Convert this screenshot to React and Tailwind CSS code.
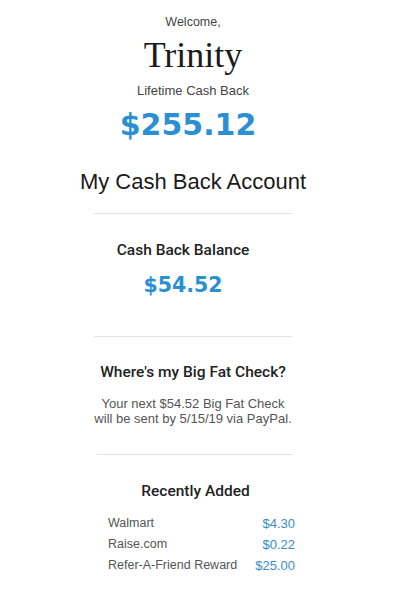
export default function App() {
	const recent = [
		{ name: "Walmart", amount: "$4.30" },
		{ name: "Raise.com", amount: "$0.22" },
		{ name: "Refer-A-Friend Reward", amount: "$25.00" },
	];

	return (
		<div className="min-h-screen w-full bg-white font-['Liberation_Sans',Arial,sans-serif]">
			<div className="w-[386px] flex flex-col items-center pt-[14px] pb-10">
				<p className="text-[12.5px] leading-[16px] text-[#444]">Welcome,</p>
				<h1 className="mt-[5px] text-[36px] leading-[40px] text-[#1a1a1a] font-['Liberation_Serif',serif]">
					Trinity
				</h1>
				<p className="mt-[8px] text-[13px] leading-[16px] text-[#444]">
					Lifetime Cash Back
				</p>
				<p className="mt-[8px] pr-[10px] text-[30px] leading-[36px] font-bold text-[#2b8fd4] font-['DejaVu_Sans',sans-serif]">
					$255.12
				</p>
				<h2 className="mt-[26px] text-[22px] leading-[26px] text-[#1a1a1a]">
					My Cash Back Account
				</h2>

				<hr className="mt-[18px] w-[198px] border-t border-[#e2e2e2]" />

				<div className="flex flex-col items-center pr-[20px]">
					<h3 className="mt-[26px] text-[15.5px] leading-[20px] font-medium text-[#222] font-['Roboto',sans-serif]">
						Cash Back Balance
					</h3>
					<p className="mt-[12px] text-[20.5px] leading-[26px] font-bold text-[#2b8fd4] font-['DejaVu_Sans',sans-serif]">
						$54.52
					</p>
				</div>

				<hr className="mt-[38px] w-[198px] border-t border-[#e2e2e2]" />

				<h3 className="mt-[25px] text-[15.5px] leading-[20px] font-medium text-[#222] font-['Roboto',sans-serif]">
					Where's my Big Fat Check?
				</h3>
				<p className="mt-[14px] text-center text-[13px] leading-[15px] text-[#555]">
					Your next $54.52 Big Fat Check
					<br />
					will be sent by 5/15/19 via PayPal.
				</p>

				<hr className="mt-[28px] ml-[4px] w-[196px] border-t border-[#e2e2e2]" />

				<h3 className="mt-[26px] pl-[5px] text-[15.5px] leading-[20px] font-medium text-[#222] font-['Roboto',sans-serif]">
					Recently Added
				</h3>
				<div className="mt-[12px] ml-[17px] w-[187px] flex flex-col">
					{recent.map((item) => (
						<div
							key={item.name}
							className="flex justify-between text-[12.5px] leading-[21px]"
						>
							<span className="text-[#555]">{item.name}</span>
							<span className="text-[13px] text-[#3a8cc8]">{item.amount}</span>
						</div>
					))}
				</div>
			</div>
		</div>
	);
}
